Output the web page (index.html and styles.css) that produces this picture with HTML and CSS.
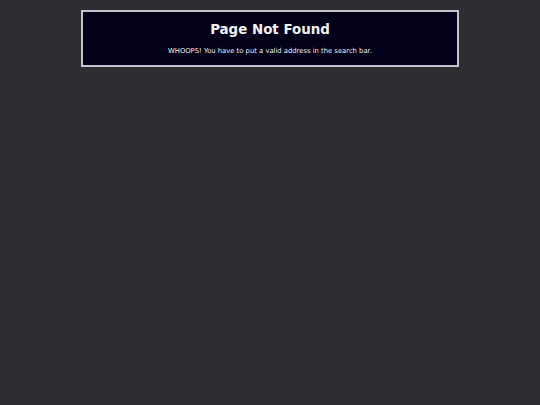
FILE: index.html
```html
<!DOCTYPE html>
<html>
<head>
<meta charset="utf-8">
<link rel="stylesheet" href="styles.css">
</head>
<body>
<div class="box">
  <h1 class="title">Page Not Found</h1>
  <p class="msg">WHOOPS! You have to put a valid address in the search bar.</p>
</div>
</body>
</html>
```
FILE: styles.css
```css
html, body {
  margin: 0;
  padding: 0;
  background: #2d2e32;
  font-family: "DejaVu Sans", sans-serif;
}
body {
  padding-top: 10px;
}
.box {
  width: 378px;
  box-sizing: border-box;
  margin: 0 auto;
  background: #03001a;
  border: 2px solid #c4c4cc;
  padding: 9px 0 9px;
  text-align: center;
  color: #f2f2f2;
}
.title {
  margin: 0;
  font-size: 13.4px;
  font-weight: bold;
  line-height: 17px;
}
.msg {
  margin: 9px 0 0;
  font-size: 6.8px;
  line-height: 9px;
}
```
